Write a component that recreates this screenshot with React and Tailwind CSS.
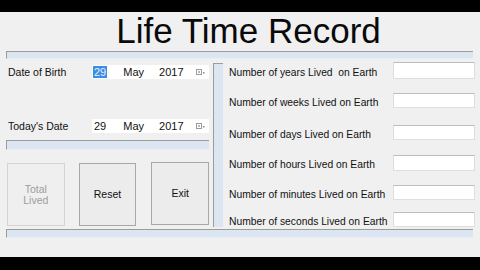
import React from 'react'

const font = { fontFamily: '"Liberation Sans", Arial, sans-serif' }

function Bar({ className }) {
    return <div className={`bg-[#dbe6f2] border-t border-l border-[#9c9c9c] border-b border-b-[#e8eef5] ${className}`} />
}

function DateBox({ selected }) {
    return (
        <div className="w-[117px] h-[14px] bg-white flex items-center text-[11px] text-[#111] leading-none">
            <span className={`ml-[1px] px-[1px] h-[12px] flex items-center ${selected ? 'bg-[#3a8ee3] text-[#e6f0fb]' : ''}`}>29</span>
            <span className="ml-[16px]">May</span>
            <span className="ml-[15px]">2017</span>
            <svg className="ml-auto mr-[4px]" width="9" height="7" viewBox="0 0 9 7">
                <rect x="0.5" y="0.5" width="5" height="5" fill="none" stroke="#9a9a9a" />
                <rect x="2" y="2" width="2" height="2" fill="#b5b5b5" />
                <rect x="7" y="3" width="1.5" height="1.5" fill="#8a8a8a" />
            </svg>
        </div>
    )
}

function Btn({ children, disabled, className }) {
    return (
        <div className={`w-[58px] h-[63px] flex items-center justify-center text-center text-[10.5px] leading-[11px] border ${disabled ? 'border-[#d4d4d4] text-[#9d9d9d] bg-[#efefef]' : 'border-[#a8a8a8] text-[#111] bg-[#ececec]'} ${className}`}>
            {children}
        </div>
    )
}

const rows = [
    { label: 'Number of years Lived  on Earth', mt: 'mt-[3px]', h: 'h-[17px]' },
    { label: 'Number of weeks Lived on Earth', mt: 'mt-[14px]', h: 'h-[15px]' },
    { label: 'Number of days Lived on Earth', mt: 'mt-[17px]', h: 'h-[15px]' },
    { label: 'Number of hours Lived on Earth', mt: 'mt-[15px]', h: 'h-[16px]' },
    { label: 'Number of minutes Lived on Earth', mt: 'mt-[14px]', h: 'h-[15px]' },
    { label: 'Number of seconds Lived on Earth', mt: 'mt-[12px]', h: 'h-[15px]' },
]

export default function App() {
    return (
        <div className="w-[480px] h-[270px] bg-[#f0f0f0] flex flex-col overflow-hidden" style={font}>
            <div className="h-[12px] bg-black shrink-0" />
            <div className="h-[39px] shrink-0 flex items-end justify-center pl-[17px]">
                <h1 className="text-[35px] leading-[40px] text-[#0a0a0a] whitespace-pre">Life Time Record</h1>
            </div>
            <Bar className="ml-[6px] w-[467px] h-[8px] shrink-0" />
            <div className="h-[170px] shrink-0 flex ml-[6px]">
                <div className="w-[203px] flex flex-col">
                    <div className="mt-[6px] h-[14px] flex items-center justify-between text-[10.5px] leading-none text-[#111]">
                        <span className="ml-[2px]">Date of Birth</span>
                        <DateBox selected />
                    </div>
                    <div className="mt-[40px] h-[14px] flex items-center justify-between text-[10.5px] leading-none text-[#111]">
                        <span className="ml-[2px]">Today's Date</span>
                        <DateBox />
                    </div>
                    <Bar className="mt-[7px] h-[10px]" />
                    <div className="mt-[13px] flex items-start">
                        <Btn disabled className="ml-[1px]">Total<br />Lived</Btn>
                        <Btn className="ml-[14px]">Reset</Btn>
                        <Btn className="ml-[15px] -mt-[1px]">Exit</Btn>
                    </div>
                </div>
                <Bar className="ml-[4px] mt-[4px] w-[10px] h-[164px] border-b-0" />
                <div className="ml-[6px] w-[246px] flex flex-col">
                    {rows.map((r) => (
                        <div key={r.label} className={`${r.mt} ${r.h} flex items-center justify-between leading-none`}>
                            <span className="mt-[5px] text-[10.3px] text-[#111] whitespace-pre">{r.label}</span>
                            <div className={`w-[82px] h-full bg-white border border-[#dedede] border-t-[#bdbdbd]`} />
                        </div>
                    ))}
                </div>
            </div>
            <Bar className="ml-[6px] w-[467px] h-[9px] shrink-0" />
            <div className="flex-1" />
            <div className="h-[13px] bg-black shrink-0" />
        </div>
    )
}
